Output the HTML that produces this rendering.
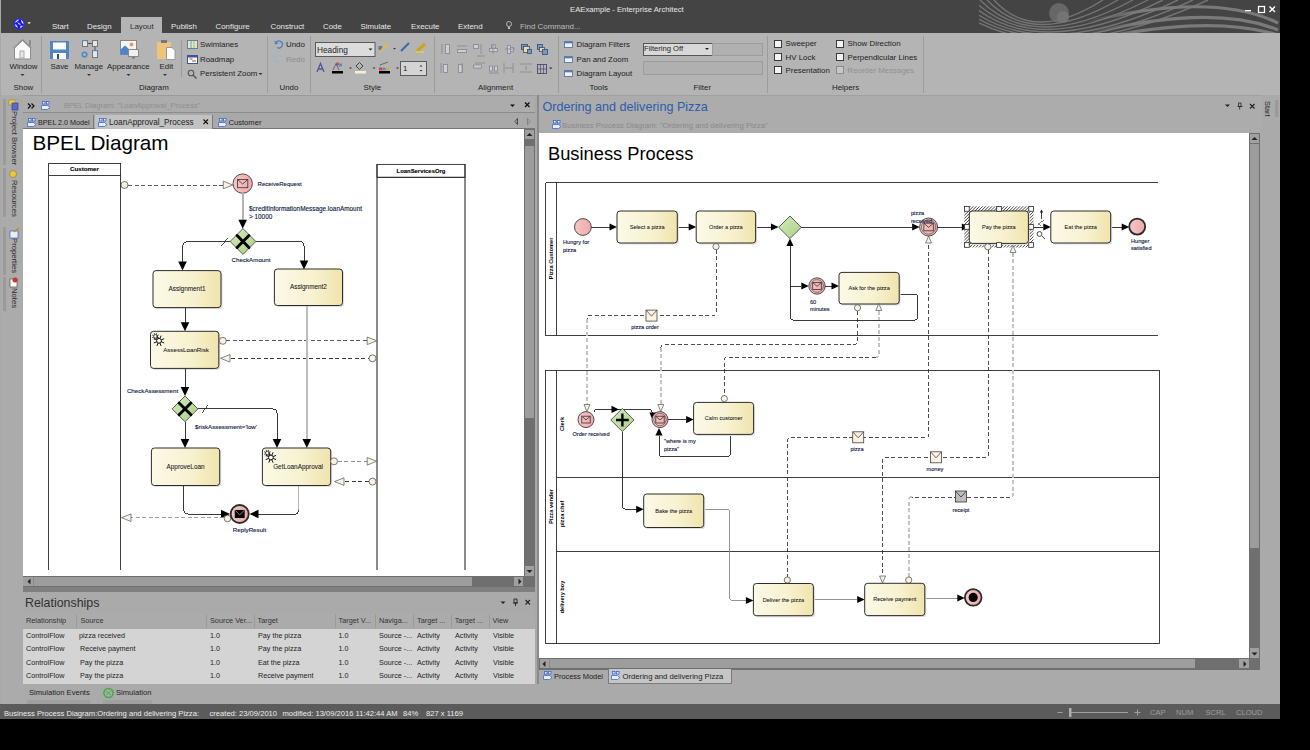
<!DOCTYPE html>
<html><head><meta charset="utf-8">
<style>
*{box-sizing:border-box}
html,body{margin:0;padding:0}
body{width:1310px;height:750px;background:#000;position:relative;overflow:hidden;font-family:"Liberation Sans",sans-serif;color:#1e1e1e}
.a{position:absolute}
.t{position:absolute;white-space:nowrap;font-size:7.9px;line-height:10px}
.tb{background:#444}
.sep{position:absolute;width:1px;background:#9c9c9c}
.cb{position:absolute;width:8px;height:8px;background:#f4f4f4;border:1px solid #3a3a3a}
</style></head>
<body>
<div class="a" style="left:0;top:0;width:1280px;height:718px;background:#aaaaaa"></div>
<!-- title bar -->
<div class="a tb" style="left:0;top:0;width:1280px;height:33px"></div>
<div class="t" style="left:570px;top:4.8px;color:#e8e8e8;font-size:7.7px">EAExample - Enterprise Architect</div>
<!-- tabs -->
<div class="a" style="left:121px;top:17px;width:41px;height:16px;background:#b4b4b4"></div>
<div class="t" style="left:52px;top:21.5px;color:#e6e6e6">Start</div>
<div class="t" style="left:87px;top:21.5px;color:#e6e6e6">Design</div>
<div class="t" style="left:130px;top:21.5px;color:#303030">Layout</div>
<div class="t" style="left:171px;top:21.5px;color:#e6e6e6">Publish</div>
<div class="t" style="left:215.5px;top:21.5px;color:#e6e6e6">Configure</div>
<div class="t" style="left:270.5px;top:21.5px;color:#e6e6e6">Construct</div>
<div class="t" style="left:323px;top:21.5px;color:#e6e6e6">Code</div>
<div class="t" style="left:360.5px;top:21.5px;color:#e6e6e6">Simulate</div>
<div class="t" style="left:411px;top:21.5px;color:#e6e6e6">Execute</div>
<div class="t" style="left:458px;top:21.5px;color:#e6e6e6">Extend</div>
<div class="t" style="left:520px;top:21.5px;color:#bdbdbd">Find Command...</div>
<!-- ribbon -->
<div class="a" style="left:1px;top:33px;width:1279px;height:62px;background:#b4b4b4"></div>


<!-- ribbon content -->
<div class="sep" style="left:41px;top:36px;height:57px"></div>
<div class="sep" style="left:267px;top:36px;height:57px"></div>
<div class="sep" style="left:310px;top:36px;height:57px"></div>
<div class="sep" style="left:434px;top:36px;height:57px"></div>
<div class="sep" style="left:558px;top:36px;height:57px"></div>
<div class="sep" style="left:767px;top:36px;height:57px"></div>
<div class="sep" style="left:923px;top:36px;height:57px"></div>
<div class="sep" style="left:181px;top:40px;height:37px"></div>
<svg class="a" style="left:0;top:33px" width="440" height="62" viewBox="0 33 440 62">
 <!-- house -->
 <path d="M13 48 L22.5 39 L32 48 Z" fill="#8a8a8a"/>
 <path d="M14.5 48 L22.5 40.5 L30.5 48 V59 H14.5 Z" fill="#fafafa" stroke="#8c8c8c" stroke-width="1"/>
 <rect x="29" y="40" width="2" height="6" fill="#8c8c8c"/>
 <rect x="20" y="51" width="4" height="7" fill="#e8e8e8" stroke="#9a9a9a" stroke-width="0.8"/>
 <!-- save -->
 <rect x="50" y="41" width="19" height="18" fill="#4f86c6"/>
 <rect x="53" y="42.5" width="13" height="7" fill="#fbfbfb"/>
 <rect x="53" y="53" width="13" height="6" fill="#fbfbfb"/>
 <rect x="57" y="54" width="2" height="5" fill="#2d4f7a"/>
 <!-- manage -->
 <rect x="82.5" y="40.5" width="5" height="6" fill="#e6e6e6" stroke="#777" stroke-width="1"/>
 <rect x="92.5" y="40.5" width="5" height="6" fill="#e6e6e6" stroke="#777" stroke-width="1"/>
 <rect x="92.5" y="50.5" width="5" height="7" fill="#e6e6e6" stroke="#777" stroke-width="1"/>
 <path d="M88 43.5 H92 M95 47 V50" stroke="#555" stroke-width="1"/>
 <rect x="82" y="40" width="6" height="1.2" fill="#4a8ad0"/>
 <rect x="92" y="50" width="6" height="1.2" fill="#4a8ad0"/>
 <circle cx="84.5" cy="54.5" r="2.3" fill="none" stroke="#4a8ad0" stroke-width="1.6"/>
 <!-- appearance -->
 <rect x="120.5" y="40.5" width="16" height="14" fill="#f4f4f4" stroke="#888" stroke-width="1"/>
 <path d="M120.5 54.5 V49.5 L125 45.5 L129.5 49.5 V54.5 Z" fill="#4a86c8"/>
 <circle cx="131.5" cy="44.5" r="2" fill="#ee9a55"/>
 <rect x="128.5" y="49.5" width="10" height="7" fill="#f0f0f0" stroke="#888" stroke-width="1"/>
 <rect x="132" y="57" width="3" height="1.5" fill="#777"/>
 <!-- edit -->
 <rect x="157" y="42" width="14" height="17" fill="#eec47a"/>
 <rect x="161" y="40" width="6" height="3" fill="#777"/>
 <path d="M166.5 47.5 H172 L175 50.5 V59.5 H166.5 Z" fill="#fff" stroke="#999" stroke-width="1"/>
 <!-- arrows -->
 <path d="M20.5 74 h4 l-2 2z M87 74 h4 l-2 2z M126.5 74 h4 l-2 2z M163 74 h4 l-2 2z M258.5 73 h4 l-2 2z" fill="#333"/>
 <!-- swimlanes, roadmap, zoom -->
 <rect x="187.5" y="40.5" width="10" height="8" fill="#f2e4b0" stroke="#6a7da0" stroke-width="1"/>
 <rect x="190" y="41" width="2" height="7" fill="#9cc3e0"/><rect x="193" y="41" width="2" height="7" fill="#b8d8a0"/>
 <rect x="187.5" y="55.5" width="10" height="8" fill="#fafafa" stroke="#3a5a90" stroke-width="1"/>
 <rect x="188" y="56" width="9" height="1.5" fill="#3a5a90"/>
 <path d="M189.5 59 h3 M192 61 h4" stroke="#d04040" stroke-width="1"/>
 <circle cx="191" cy="73" r="2.8" fill="none" stroke="#555" stroke-width="1.1"/>
 <path d="M193 75 L196.5 78.5" stroke="#555" stroke-width="1.4"/>
 <!-- undo redo -->
 <path d="M276 42.5 A3.5 3.5 0 1 1 277 47.5" fill="none" stroke="#4a7fc8" stroke-width="1.3"/>
 <path d="M274.5 40.5 L275 44.5 L278.5 43.5 Z" fill="#4a7fc8"/>
 <path d="M281 56.5 A3.5 3.5 0 1 0 280 61.5" fill="none" stroke="#98b4d8" stroke-width="1.3"/>
 <!-- style -->
 <rect x="315.5" y="42.5" width="59.5" height="14" fill="#dcdcdc" stroke="#5a5a5a" stroke-width="1"/>
 <path d="M368.5 48.5 h4 l-2 2z" fill="#222"/>
 <path d="M378.5 46 h4 v4 h-4z" fill="#5a7ab0"/>
 <path d="M381 51 L387 44" stroke="#e8b840" stroke-width="2.2"/>
 <path d="M393 48 h3 l-1.5 1.5z M349 67.5 h3 l-1.5 1.5z M372.5 67.5 h3 l-1.5 1.5z M396 67.5 h3 l-1.5 1.5z" fill="#333"/>
 <path d="M401 51 L409 43" stroke="#3a6ab0" stroke-width="2"/>
 <path d="M417 51 L425 44" stroke="#d0a020" stroke-width="3"/>
 <path d="M416 52 h8" stroke="#e0d040" stroke-width="1.5"/>
 <path d="M317 72 L320.5 63.5 L324 72 M318.3 69 h4.4" fill="none" stroke="#4a5a90" stroke-width="1.3"/>
 <rect x="332" y="71" width="11" height="2.5" fill="#000"/>
 <rect x="336" y="62.5" width="3" height="3" fill="#e05040"/><rect x="339" y="63.5" width="3" height="3" fill="#4a90e0"/>
 <path d="M333 70 L336 63.5 L339 70" fill="none" stroke="#555" stroke-width="0.8"/>
 <rect x="355" y="71" width="11" height="2.5" fill="#f4f0d0"/>
 <path d="M356 66 L359.5 62.5 L363 66 L359.5 69.5Z" fill="none" stroke="#444" stroke-width="1"/>
 <rect x="379" y="71" width="11" height="2.5" fill="#000"/>
 <rect x="379" y="67.5" width="3" height="3" fill="#e04040"/><rect x="382.5" y="67.5" width="3" height="3" fill="#4a90e0"/><rect x="386" y="67.5" width="3" height="3" fill="#f0a030"/>
 <path d="M380 65 L388 62" stroke="#555" stroke-width="0.8"/>
 <rect x="400.5" y="61.5" width="26" height="14" fill="#d4d4d4" stroke="#5a5a5a" stroke-width="1"/>
 <path d="M419.5 66.5 h3 l-1.5 -1.5z M419.5 70 h3 l-1.5 1.5z" fill="#333"/>
</svg>
<div class="t" style="left:9.5px;top:61.5px">Window</div>
<div class="t" style="left:13.5px;top:82.5px">Show</div>
<div class="t" style="left:50.5px;top:61.5px">Save</div>
<div class="t" style="left:74.5px;top:61.5px">Manage</div>
<div class="t" style="left:107px;top:61.5px">Appearance</div>
<div class="t" style="left:159.5px;top:61.5px">Edit</div>
<div class="t" style="left:139px;top:82.5px">Diagram</div>
<div class="t" style="left:200px;top:39.5px">Swimlanes</div>
<div class="t" style="left:200px;top:54.5px">Roadmap</div>
<div class="t" style="left:200px;top:69px">Persistent Zoom</div>
<div class="t" style="left:286px;top:39.5px">Undo</div>
<div class="t" style="left:286px;top:54.5px;color:#8e8e8e">Redo</div>
<div class="t" style="left:279.5px;top:82.5px">Undo</div>
<div class="t" style="left:317px;top:44.5px;font-size:8.3px">Heading</div>
<div class="t" style="left:403px;top:63.5px">1</div>
<div class="t" style="left:363.5px;top:82.5px">Style</div>
<div class="t" style="left:478px;top:82.5px">Alignment</div>
<div class="t" style="left:576.5px;top:39.5px">Diagram Filters</div>
<div class="t" style="left:576.5px;top:54.5px">Pan and Zoom</div>
<div class="t" style="left:576.5px;top:69px">Diagram Layout</div>
<div class="t" style="left:589.5px;top:82.5px">Tools</div>


<!-- alignment icons -->
<svg class="a" style="left:436px;top:40px" width="120" height="38" viewBox="436 40 120 38">
 <g fill="#cfcfcf" stroke="#8a8a9a" stroke-width="0.9">
  <rect x="445.5" y="44.5" width="4" height="9"/>
  <rect x="457.5" y="49.5" width="9" height="3"/>
  <rect x="473.5" y="44.5" width="5" height="4"/>
  <rect x="489.5" y="48.5" width="8" height="3"/><rect x="491.5" y="45" width="4" height="3"/>
  <rect x="507.5" y="45.5" width="3" height="8"/><rect x="510.5" y="47.5" width="3" height="4"/>
  <rect x="443.5" y="64.5" width="4" height="8"/><rect x="458.5" y="64.5" width="4" height="8"/>
  <rect x="473.5" y="65" width="8" height="3"/><rect x="489.5" y="66" width="3" height="5"/><rect x="494.5" y="66" width="3" height="5"/>
 </g>
 <g stroke="#8a8a9a" stroke-width="0.9" fill="none">
  <path d="M442 44 v10 M457 46 h10 M481 44 v10 M477 56 h8 M493 44 v10 M505 49 h10 M441 63 v10 M462 63 v10 M475 63 h10 M489 73 h10 M504 63 v10 M513 63 v10 M505 68 h8 M520 64 h12 M520 72 h12 M526 66 v4"/>
 </g>
 <rect x="521.5" y="44.5" width="6" height="5" fill="#6f9bd0" stroke="#3a4a70" stroke-width="0.8"/>
 <rect x="523.5" y="46.5" width="6" height="6" fill="#f0d8a0" stroke="#3a4a70" stroke-width="0.8"/>
 <rect x="527.5" y="49.5" width="4" height="4" fill="#6f9bd0" stroke="#3a4a70" stroke-width="0.8"/>
 <rect x="537.5" y="44.5" width="5" height="5" fill="#6f9bd0" stroke="#3a4a70" stroke-width="0.8"/>
 <rect x="539.5" y="47.5" width="5" height="4" fill="#f0d8a0" stroke="#3a4a70" stroke-width="0.8"/>
 <rect x="542.5" y="49.5" width="5" height="5" fill="#6f9bd0" stroke="#3a4a70" stroke-width="0.8"/>
 <rect x="537.5" y="64.5" width="9" height="9" fill="none" stroke="#4a4a70" stroke-width="0.9"/>
 <path d="M540.5 64 v10 M543.5 64 v10 M537 69 h10" stroke="#4a4a70" stroke-width="0.7"/>
 <path d="M549 67.5 h3.5 l-1.75 1.75z" fill="#333"/>
</svg>
<svg class="a" style="left:560px;top:38px" width="20" height="40" viewBox="560 38 20 40">
 <rect x="564.5" y="41.5" width="8" height="6" fill="#eef2f8" stroke="#5577aa" stroke-width="0.9"/><rect x="565" y="42" width="7" height="1.3" fill="#5577aa"/>
 <rect x="564.5" y="56.5" width="8" height="6" fill="#eef2f8" stroke="#5577aa" stroke-width="0.9"/><rect x="565" y="57" width="7" height="1.3" fill="#5577aa"/>
 <rect x="564.5" y="70.5" width="8" height="6" fill="#eef2f8" stroke="#5577aa" stroke-width="0.9"/><rect x="565" y="71" width="7" height="1.3" fill="#5577aa"/>
</svg>
<!-- filter -->
<div class="a" style="left:642.5px;top:42.5px;width:70px;height:13.5px;background:#d8d8d8;border:1px solid #555"></div>
<div class="t" style="left:644px;top:44px;font-size:7.6px">Filtering Off</div>
<svg class="a" style="left:700px;top:45px" width="12" height="8"><path d="M5 3 h4 l-2 2z" fill="#222"/></svg>
<div class="a" style="left:712px;top:42.5px;width:51px;height:13.5px;background:#b0b0b0;border:1px solid #9c9c9c"></div>
<div class="a" style="left:642.5px;top:61px;width:120px;height:13.5px;background:#b0b0b0;border:1px solid #9c9c9c"></div>
<div class="t" style="left:693.5px;top:82.5px">Filter</div>
<!-- helpers -->
<div class="cb" style="left:774px;top:40px"></div>
<div class="cb" style="left:774px;top:53px"></div>
<div class="cb" style="left:774px;top:66px"></div>
<div class="cb" style="left:836px;top:40px"></div>
<div class="cb" style="left:836px;top:53px"></div>
<div class="cb" style="left:836px;top:66px;border-color:#8c8c8c;background:#c8c8c8"></div>
<div class="t" style="left:785.5px;top:39px">Sweeper</div>
<div class="t" style="left:785.5px;top:52.5px">HV Lock</div>
<div class="t" style="left:785.5px;top:65.5px">Presentation</div>
<div class="t" style="left:847.5px;top:39px">Show Direction</div>
<div class="t" style="left:847.5px;top:52.5px">Perpendicular Lines</div>
<div class="t" style="left:847.5px;top:65.5px;color:#909090">Reorder Messages</div>
<div class="t" style="left:832px;top:82.5px">Helpers</div>
<!-- title decorations -->
<svg class="a" style="left:0;top:0" width="1280" height="33" viewBox="0 0 1280 33">
 <circle cx="19.2" cy="23.8" r="5.6" fill="#2a2af6"/>
 <circle cx="19.2" cy="23.8" r="3.6" fill="none" stroke="#e4e4ff" stroke-width="1.3"/>
 <circle cx="19.8" cy="20.6" r="1.3" fill="#0c0ce8"/><circle cx="16.2" cy="23.4" r="1.2" fill="#0c0ce8"/><circle cx="22.3" cy="24.6" r="1.2" fill="#0c0ce8"/><circle cx="18.8" cy="26.9" r="1.3" fill="#0c0ce8"/>
 <path d="M17.8 22.8 L20.6 24.8" stroke="#f4f4ff" stroke-width="0.9"/>
 <path d="M27.3 22.3 h3.6 l-1.8 2z" fill="#eee"/>
 <defs><clipPath id="cl1"><rect x="979" y="0" width="300" height="33"/></clipPath><linearGradient id="fadeg" gradientUnits="userSpaceOnUse" x1="1085" x2="1135" y1="0" y2="0"><stop offset="0" stop-color="#fff" stop-opacity="0"/><stop offset="1" stop-color="#fff" stop-opacity="1"/></linearGradient><mask id="mk1"><rect x="960" y="0" width="320" height="33" fill="url(#fadeg)"/></mask></defs>
 <circle cx="1059" cy="13" r="10" fill="#676767"/>
 <circle cx="1063" cy="17" r="6" fill="#747474"/>
 <g clip-path="url(#cl1)" fill="none" stroke="#747474" stroke-width="1.4">
  <path d="M994 0 Q1033.5 44 1103 0"/>
  <path d="M987 0 Q1033.5 49 1118 0"/>
  <path d="M980 0 Q1033.5 54 1133 0"/>
  <path d="M973 0 Q1033.5 59 1148 0"/>
  <path d="M966 0 Q1033.5 64 1163 0"/>
  <path d="M959 0 Q1033.5 69 1178 0"/>
  <path d="M952 0 Q1033.5 74 1193 0"/>
  <path d="M945 0 Q1033.5 79 1208 0"/>
 </g>
 <g mask="url(#mk1)" fill="none" stroke="#7a7a7a" stroke-width="3.2">
  <path d="M1080 24 Q1210 -10 1278 23"/>
  <path d="M1080 36 Q1210 2 1278 30"/>
  <path d="M1090 40 Q1210 14 1278 35"/>
 </g>
 <rect x="1245" y="10" width="6" height="1.3" fill="#fff"/>
 <rect x="1258.5" y="6.5" width="6" height="6" fill="none" stroke="#fff" stroke-width="1.3"/>
 <path d="M1269.5 6.5 l5.5 5.5 M1275 6.5 l-5.5 5.5" stroke="#fff" stroke-width="1.3"/>
 <!-- find bulb -->
 <circle cx="509" cy="24" r="2.5" fill="none" stroke="#c0c0c0" stroke-width="0.9"/>
 <path d="M508 27 h2 v2 h-2z" fill="#c0c0c0"/>
</svg>

<!-- left strip -->
<div class="a" style="left:0;top:95px;width:23px;height:609px;background:#ababab;border-left:1px solid #b8b8b8"></div>
<div class="a" style="left:3px;top:99px;width:3px;height:66px;background:#9a9a9a"></div>
<div class="a" style="left:3px;top:168px;width:3px;height:49px;background:#9a9a9a"></div>
<div class="a" style="left:3px;top:227px;width:3px;height:48px;background:#9a9a9a"></div>
<div class="a" style="left:3px;top:277px;width:3px;height:34px;background:#9a9a9a"></div>
<div class="t" style="left:19px;top:111px;transform-origin:0 0;transform:rotate(90deg);font-size:7.7px;color:#2a2a2a">Project Browser</div>
<div class="t" style="left:19px;top:180px;transform-origin:0 0;transform:rotate(90deg);font-size:7.7px;color:#2a2a2a">Resources</div>
<div class="t" style="left:19px;top:238px;transform-origin:0 0;transform:rotate(90deg);font-size:7.7px;color:#2a2a2a">Properties</div>
<div class="t" style="left:19px;top:288px;transform-origin:0 0;transform:rotate(90deg);font-size:7.7px;color:#2a2a2a">Notes</div>
<svg class="a" style="left:0;top:95px" width="23" height="220" viewBox="0 95 23 220">
 <rect x="9" y="100" width="6" height="5" fill="#e8d040" stroke="#a08a20" stroke-width="0.6"/>
 <rect x="12" y="103" width="6" height="7" fill="#5a6ad0" stroke="#303080" stroke-width="0.6"/>
 <circle cx="13" cy="174" r="3.5" fill="#e8c840" stroke="#908030" stroke-width="0.7"/>
 <rect x="10" y="231" width="8" height="7" fill="#e8f0ff" stroke="#4060b0" stroke-width="0.7"/>
 <path d="M14 232 L19 228" stroke="#b09020" stroke-width="1.2"/>
 <rect x="10" y="279" width="7" height="8" fill="#fff" stroke="#555" stroke-width="0.7"/>
 <circle cx="15" cy="280" r="2.5" fill="#d03030"/>
</svg>

<!-- left panel -->
<div class="a" style="left:23px;top:95px;width:512px;height:18px;background:#acacac;border-top:1px solid #9a9a9a;border-bottom:1px solid #8c8c8c"></div>
<div class="a" style="left:23px;top:113px;width:512px;height:16px;background:#a9a9a9;border-bottom:1px solid #767676"></div>
<div class="a" style="left:95px;top:115px;width:117px;height:14px;background:#c2c2c2"></div>
<div class="a" style="left:93px;top:115px;width:1px;height:14px;background:#7a7a7a"></div>
<div class="a" style="left:212px;top:115px;width:1px;height:14px;background:#7a7a7a"></div>
<div class="t" style="left:64px;top:101px;font-size:7.5px;color:#8e8e8e">BPEL Diagram: "LoanApproval_Process"</div>
<div class="t" style="left:38px;top:118px;font-size:7.2px;color:#222">BPEL 2.0 Model</div>
<div class="t" style="left:109px;top:118px;font-size:8.2px;color:#222">LoanApproval_Process</div>
<div class="t" style="left:228.5px;top:118px;font-size:7.6px;color:#222">Customer</div>
<svg class="a" style="left:23px;top:95px" width="512" height="34" viewBox="23 95 512 34">
 <g>
  <g fill="#e4eefc" stroke="#3a6ad0" stroke-width="0.8"><rect x="42.5" y="101.5" width="2.5" height="2.5"/><rect x="46.5" y="101.5" width="2.5" height="2.5"/><path d="M41.5 105.5 h6 l2.5 2 l-2.5 2 h-6 z"/></g>
  <g fill="#e4eefc" stroke="#3a6ad0" stroke-width="0.8"><rect x="28.5" y="118.5" width="2.5" height="2.5"/><rect x="32.5" y="118.5" width="2.5" height="2.5"/><path d="M27.5 122.5 h6 l2.5 2 l-2.5 2 h-6 z"/></g>
  <g fill="#e4eefc" stroke="#3a6ad0" stroke-width="0.8"><rect x="99.5" y="118.5" width="2.5" height="2.5"/><rect x="103.5" y="118.5" width="2.5" height="2.5"/><path d="M98.5 122.5 h6 l2.5 2 l-2.5 2 h-6 z"/></g>
  <g fill="#e4eefc" stroke="#3a6ad0" stroke-width="0.8"><rect x="219.5" y="118.5" width="2.5" height="2.5"/><rect x="223.5" y="118.5" width="2.5" height="2.5"/><path d="M218.5 122.5 h6 l2.5 2 l-2.5 2 h-6 z"/></g>
 </g>
 <path d="M203.5 119.5 l4.5 4.5 M208 119.5 l-4.5 4.5" stroke="#111" stroke-width="1.1"/>
 <path d="M28 103.5 l2.5 2.5 l-2.5 2.5 M31.5 103.5 l2.5 2.5 l-2.5 2.5" fill="none" stroke="#111" stroke-width="1.2"/>
 <path d="M510 104.5 h5 l-2.5 2.5z" fill="#111"/>
 <path d="M525 102.5 l4.5 4.5 M529.5 102.5 l-4.5 4.5" stroke="#111" stroke-width="1.3"/>
 <path d="M517.5 118.5 v6 l-2.5 -3z" fill="none" stroke="#333" stroke-width="0.8"/>
 <path d="M527.5 118.5 v6 l2.5 -3z" fill="none" stroke="#777" stroke-width="0.8"/>
</svg>
<div class="a" style="left:23px;top:129px;width:501px;height:447px;background:#fff"></div>
<!--BPEL-->
<svg class="a" style="left:23px;top:129px" width="501" height="447" viewBox="23 129 501 447" font-family='"Liberation Sans",sans-serif'>
<defs>
<linearGradient id="ga" x1="0" x2="1" y1="0" y2="0"><stop offset="0" stop-color="#fcf9e6"/><stop offset="0.55" stop-color="#f8f2d2"/><stop offset="1" stop-color="#efe4ac"/></linearGradient>
<linearGradient id="ge" x1="0" x2="1" y1="0" y2="0"><stop offset="0" stop-color="#f6c6c6"/><stop offset="1" stop-color="#f0a8a8"/></linearGradient>
<linearGradient id="gg" x1="0" x2="1" y1="0" y2="1"><stop offset="0" stop-color="#d6ebbc"/><stop offset="1" stop-color="#a8cf84"/></linearGradient>
<pattern id="hatch" width="2.2" height="2.2" patternUnits="userSpaceOnUse" patternTransform="rotate(45)"><rect width="2.2" height="2.2" fill="#fff"/><line x1="0" y1="0" x2="0" y2="2.2" stroke="#222" stroke-width="1.2"/></pattern>
</defs>
<text x="32.5" y="150" font-size="20.7" fill="#000">BPEL Diagram</text>
<path d="M48.5 569.5 V163 H120.5 V569.5" fill="none" stroke="#2a2a2a" stroke-width="0.9" shape-rendering="crispEdges"/>
<path d="M48.5 175.2 H120.5" fill="none" stroke="#2a2a2a" stroke-width="0.9" shape-rendering="crispEdges"/>
<text x="84.5" y="171.17" font-size="6.2" text-anchor="middle" fill="#000" stroke="#000" stroke-width="0.12" font-weight="bold">Customer</text>
<path d="M377 569.5 V164.4 M465 164.4 V569.5" fill="none" stroke="#8a8a8a" stroke-width="1.1" shape-rendering="crispEdges"/>
<path d="M377 177.2 H465" fill="none" stroke="#2a2a2a" stroke-width="0.9" shape-rendering="crispEdges"/>
<rect x="377" y="164.4" width="88" height="12.8" fill="none" stroke="#2a2a2a" stroke-width="0.9"/>
<text x="421" y="172.87" font-size="5.9" text-anchor="middle" fill="#000" stroke="#000" stroke-width="0.12" font-weight="bold">LoanServicesOrg</text>
<path d="M128 185 H223" fill="none" stroke="#333" stroke-width="0.8" stroke-dasharray="4,2.5" shape-rendering="crispEdges"/>
<circle cx="124.5" cy="185" r="3.5" fill="#f8f2e2" stroke="#444" stroke-width="0.7"/>
<polygon points="232.80,185.00 223.30,181.20 223.30,188.80" fill="#f8f4e4" stroke="#555" stroke-width="0.7"/>
<circle cx="242.7" cy="183.6" r="9.7" fill="url(#ge)" stroke="#2a2a2a" stroke-width="0.8"/><rect x="237.6075" y="179.4775" width="10.185" height="8.245" fill="none" stroke="#333" stroke-width="0.8"/><path d="M237.6075 179.4775 L242.7 184.01225 L247.7925 179.4775" fill="none" stroke="#333" stroke-width="0.8"/>
<text x="257.6" y="185.70" font-size="6.0" text-anchor="start" fill="#0c1640" stroke="#0c1640" stroke-width="0.12">ReceiveRequest</text>
<path d="M242.7 193.3 V221" fill="none" stroke="#b4b4b4" stroke-width="2" shape-rendering="crispEdges"/>
<polygon points="242.70,228.80 238.40,219.80 247.00,219.80" fill="#000"/>
<text x="249" y="211.04" font-size="6.4" text-anchor="start" fill="#0c1640" stroke="#0c1640" stroke-width="0.12">$creditInformationMessage.loanAmount</text>
<text x="249" y="219.24" font-size="6.4" text-anchor="start" fill="#0c1640" stroke="#0c1640" stroke-width="0.12">&gt; 10000</text>
<path d="M230 241.5 H186.5 Q182.5 241.5 182.5 245.5 V262" fill="none" stroke="#222" stroke-width="0.9" shape-rendering="crispEdges"/>
<path d="M221 245.5 L227 237.5" fill="none" stroke="#222" stroke-width="0.8" shape-rendering="crispEdges"/>
<path d="M255.3 241.5 H300 Q304 241.5 304 245.5 V261" fill="none" stroke="#222" stroke-width="0.9" shape-rendering="crispEdges"/>
<polygon points="182.50,270.60 178.20,261.60 186.80,261.60" fill="#000"/>
<polygon points="304.00,269.50 299.70,260.50 308.30,260.50" fill="#000"/>
<polygon points="243,228.6 255.9,241.5 243,254.4 230.1,241.5" fill="url(#gg)" stroke="#3a3a3a" stroke-width="0.8"/><path d="M237.066 235.566 L248.934 247.434 M248.934 235.566 L237.066 247.434" stroke="#000" stroke-width="2.9" stroke-linecap="round"/>
<text x="251" y="261.97" font-size="6.2" text-anchor="middle" fill="#0c1640" stroke="#0c1640" stroke-width="0.12">CheckAmount</text>
<rect x="154.5" y="272.1" width="68" height="37.0" rx="3" fill="#e0e0e0"/><rect x="153" y="270.6" width="68" height="37.0" rx="3" fill="url(#ga)" stroke="#222" stroke-width="0.95"/><text x="187.0" y="291.34000000000003" font-size="6.4" text-anchor="middle" fill="#141420" stroke="#141420" stroke-width="0.06">Assignment1</text>
<rect x="275.9" y="270.5" width="68.10000000000002" height="36.5" rx="3" fill="#e0e0e0"/><rect x="274.4" y="269" width="68.10000000000002" height="36.5" rx="3" fill="url(#ga)" stroke="#222" stroke-width="0.95"/><text x="308.45" y="289.49" font-size="6.4" text-anchor="middle" fill="#141420" stroke="#141420" stroke-width="0.06">Assignment2</text>
<path d="M185 307.6 V323" fill="none" stroke="#222" stroke-width="0.9" shape-rendering="crispEdges"/>
<polygon points="185.00,331.30 180.70,322.30 189.30,322.30" fill="#000"/>
<rect x="152.0" y="332.8" width="68.30000000000001" height="37.099999999999966" rx="3" fill="#e0e0e0"/><rect x="150.5" y="331.3" width="68.30000000000001" height="37.099999999999966" rx="3" fill="url(#ga)" stroke="#222" stroke-width="0.95"/><text x="186" y="352.02000000000004" font-size="6.2" text-anchor="middle" fill="#141420" stroke="#141420" stroke-width="0.06">AssessLoanRisk</text><g stroke="#111" stroke-width="0.7" fill="none"><circle cx="155.5" cy="336.3" r="1.8" fill="#fff"/><line x1="157.16" y1="336.99" x2="158.83" y2="337.68"/><line x1="156.19" y1="337.96" x2="156.88" y2="339.63"/><line x1="154.81" y1="337.96" x2="154.12" y2="339.63"/><line x1="153.84" y1="336.99" x2="152.17" y2="337.68"/><line x1="153.84" y1="335.61" x2="152.17" y2="334.92"/><line x1="154.81" y1="334.64" x2="154.12" y2="332.97"/><line x1="156.19" y1="334.64" x2="156.88" y2="332.97"/><line x1="157.16" y1="335.61" x2="158.83" y2="334.92"/></g><g stroke="#111" stroke-width="1.0" fill="none"><circle cx="159.0" cy="340.8" r="2.4" fill="#fff"/><line x1="161.22" y1="341.72" x2="164.17" y2="342.94"/><line x1="159.92" y1="343.02" x2="161.14" y2="345.97"/><line x1="158.08" y1="343.02" x2="156.86" y2="345.97"/><line x1="156.78" y1="341.72" x2="153.83" y2="342.94"/><line x1="156.78" y1="339.88" x2="153.83" y2="338.66"/><line x1="158.08" y1="338.58" x2="156.86" y2="335.63"/><line x1="159.92" y1="338.58" x2="161.14" y2="335.63"/><line x1="161.22" y1="339.88" x2="164.17" y2="338.66"/></g>
<path d="M226 340.8 H368" fill="none" stroke="#333" stroke-width="0.8" stroke-dasharray="4,2.5" shape-rendering="crispEdges"/>
<circle cx="222.8" cy="340.8" r="3.5" fill="#f8f2e2" stroke="#444" stroke-width="0.7"/>
<polygon points="376.70,340.80 367.20,337.00 367.20,344.60" fill="#f8f4e4" stroke="#555" stroke-width="0.7"/>
<path d="M231 358.3 H369" fill="none" stroke="#222" stroke-width="0.9" stroke-dasharray="4,2.5" shape-rendering="crispEdges"/>
<polygon points="220.50,358.30 230.00,354.50 230.00,362.10" fill="#f8f4e4" stroke="#555" stroke-width="0.7"/>
<circle cx="372.5" cy="358.3" r="3.5" fill="#f8f2e2" stroke="#444" stroke-width="0.7"/>
<path d="M185 368.4 V388" fill="none" stroke="#222" stroke-width="0.9" shape-rendering="crispEdges"/>
<polygon points="185.00,396.00 180.70,387.00 189.30,387.00" fill="#000"/>
<text x="126.9" y="392.67" font-size="6.2" text-anchor="start" fill="#0c1640" stroke="#0c1640" stroke-width="0.12">CheckAssessment</text>
<path d="M198 408.9 H273 Q277 408.9 277 412.9 V439" fill="none" stroke="#222" stroke-width="0.9" shape-rendering="crispEdges"/>
<path d="M202 413 L208 405" fill="none" stroke="#222" stroke-width="0.8" shape-rendering="crispEdges"/>
<path d="M185 421.8 V440" fill="none" stroke="#222" stroke-width="0.9" shape-rendering="crispEdges"/>
<polygon points="185.00,448.00 180.70,439.00 189.30,439.00" fill="#000"/>
<polygon points="277.00,448.00 272.70,439.00 281.30,439.00" fill="#000"/>
<polygon points="185,396.0 197.9,408.9 185,421.79999999999995 172.1,408.9" fill="url(#gg)" stroke="#3a3a3a" stroke-width="0.8"/><path d="M179.066 402.96599999999995 L190.934 414.834 M190.934 402.96599999999995 L179.066 414.834" stroke="#000" stroke-width="2.9" stroke-linecap="round"/>
<text x="195" y="428.87" font-size="6.2" text-anchor="start" fill="#0c1640" stroke="#0c1640" stroke-width="0.12">$riskAssessment='low'</text>
<path d="M306.8 305.5 V440" fill="none" stroke="#bdbdbd" stroke-width="2" shape-rendering="crispEdges"/>
<polygon points="306.80,448.00 302.50,439.00 311.10,439.00" fill="#000"/>
<rect x="152.9" y="449.5" width="68.29999999999998" height="37.5" rx="3" fill="#e0e0e0"/><rect x="151.4" y="448" width="68.29999999999998" height="37.5" rx="3" fill="url(#ga)" stroke="#222" stroke-width="0.95"/><text x="185.55" y="468.99" font-size="6.4" text-anchor="middle" fill="#141420" stroke="#141420" stroke-width="0.06">ApproveLoan</text>
<rect x="263.9" y="449.5" width="68.30000000000001" height="37.5" rx="3" fill="#e0e0e0"/><rect x="262.4" y="448" width="68.30000000000001" height="37.5" rx="3" fill="url(#ga)" stroke="#222" stroke-width="0.95"/><text x="298" y="468.99" font-size="6.4" text-anchor="middle" fill="#141420" stroke="#141420" stroke-width="0.06">GetLoanApproval</text><g stroke="#111" stroke-width="0.7" fill="none"><circle cx="267.4" cy="453" r="1.8" fill="#fff"/><line x1="269.06" y1="453.69" x2="270.73" y2="454.38"/><line x1="268.09" y1="454.66" x2="268.78" y2="456.33"/><line x1="266.71" y1="454.66" x2="266.02" y2="456.33"/><line x1="265.74" y1="453.69" x2="264.07" y2="454.38"/><line x1="265.74" y1="452.31" x2="264.07" y2="451.62"/><line x1="266.71" y1="451.34" x2="266.02" y2="449.67"/><line x1="268.09" y1="451.34" x2="268.78" y2="449.67"/><line x1="269.06" y1="452.31" x2="270.73" y2="451.62"/></g><g stroke="#111" stroke-width="1.0" fill="none"><circle cx="270.9" cy="457.5" r="2.4" fill="#fff"/><line x1="273.12" y1="458.42" x2="276.07" y2="459.64"/><line x1="271.82" y1="459.72" x2="273.04" y2="462.67"/><line x1="269.98" y1="459.72" x2="268.76" y2="462.67"/><line x1="268.68" y1="458.42" x2="265.73" y2="459.64"/><line x1="268.68" y1="456.58" x2="265.73" y2="455.36"/><line x1="269.98" y1="455.28" x2="268.76" y2="452.33"/><line x1="271.82" y1="455.28" x2="273.04" y2="452.33"/><line x1="273.12" y1="456.58" x2="276.07" y2="455.36"/></g>
<path d="M337.5 461.3 H368" fill="none" stroke="#777" stroke-width="0.8" stroke-dasharray="4,2.5" shape-rendering="crispEdges"/>
<circle cx="334" cy="461.3" r="3.5" fill="#f8f2e2" stroke="#444" stroke-width="0.7"/>
<polygon points="376.70,461.30 367.20,457.50 367.20,465.10" fill="#f8f4e4" stroke="#555" stroke-width="0.7"/>
<path d="M345 481.6 H369" fill="none" stroke="#222" stroke-width="0.9" stroke-dasharray="4,2.5" shape-rendering="crispEdges"/>
<polygon points="334.50,481.60 344.00,477.80 344.00,485.40" fill="#f8f4e4" stroke="#555" stroke-width="0.7"/>
<circle cx="372.5" cy="481.6" r="3.5" fill="#f8f2e2" stroke="#444" stroke-width="0.7"/>
<path d="M183.6 485.5 V510 Q183.6 514 187.6 514 H222" fill="none" stroke="#222" stroke-width="0.9" shape-rendering="crispEdges"/>
<polygon points="230.00,514.00 221.00,509.70 221.00,518.30" fill="#000"/>
<path d="M298.5 485.5 V510" fill="none" stroke="#b4b4b4" stroke-width="1.6" shape-rendering="crispEdges"/>
<path d="M298.5 510 Q298.5 514 294.5 514 H257" fill="none" stroke="#222" stroke-width="0.9" shape-rendering="crispEdges"/>
<polygon points="249.50,514.00 258.50,509.70 258.50,518.30" fill="#000"/>
<path d="M224 517.7 H131" fill="none" stroke="#888" stroke-width="0.8" stroke-dasharray="4,2.5" shape-rendering="crispEdges"/>
<polygon points="121.50,517.70 131.00,513.90 131.00,521.50" fill="#f8f4e4" stroke="#555" stroke-width="0.7"/>
<circle cx="227.5" cy="518.5" r="3.3" fill="#f8f2e2" stroke="#444" stroke-width="0.7"/>
<circle cx="239.7" cy="514" r="9.0" fill="url(#ge)" stroke="#2a2a2a" stroke-width="1.8"/><rect x="234.75" y="509.95" width="9.9" height="8.1" fill="#000"/><path d="M235.35 510.55 L239.7 514.81 L244.05 510.55" fill="none" stroke="#ddd" stroke-width="0.6"/>
<text x="249.5" y="532.17" font-size="6.2" text-anchor="middle" fill="#0c1640" stroke="#0c1640" stroke-width="0.12">ReplyResult</text>
</svg>
<!--/BPEL-->
<!-- left v scroll -->
<div class="a" style="left:524px;top:129px;width:11px;height:447px;background:#6f6f6f"></div>
<div class="a" style="left:525px;top:129.5px;width:9px;height:9.5px;background:#a0a0a0"></div>
<div class="a" style="left:525px;top:146px;width:9px;height:272px;background:#9c9c9c"></div>
<div class="a" style="left:525px;top:566px;width:9px;height:10px;background:#a0a0a0"></div>
<svg class="a" style="left:524px;top:129px" width="11" height="447"><path d="M2.5 7 h6 l-3 -3z" fill="#222"/><path d="M2.5 441 h6 l-3 3z" fill="#222"/></svg>
<!-- left h scroll -->
<div class="a" style="left:23px;top:576px;width:512px;height:10.5px;background:#6f6f6f"></div>
<div class="a" style="left:23px;top:577px;width:449px;height:9px;background:#9d9d9d"></div>
<div class="a" style="left:23px;top:577px;width:11px;height:9px;background:#a0a0a0;border-right:1px solid #888"></div>
<div class="a" style="left:514px;top:577px;width:9px;height:9px;background:#a0a0a0"></div>
<svg class="a" style="left:23px;top:576px" width="512" height="11"><path d="M7.5 2.5 v6 l-3 -3z" fill="#222"/><path d="M495.5 2.5 v6 l3 -3z" fill="#222"/></svg>
<div class="a" style="left:23px;top:586.5px;width:512px;height:5px;background:#7f7f7f"></div>

<!-- relationships -->
<div class="t" style="left:25px;top:596px;font-size:12.4px;line-height:14px;color:#303030">Relationships</div>
<svg class="a" style="left:495px;top:596px" width="40" height="14" viewBox="495 596 40 14">
 <path d="M500.5 601.5 h5 l-2.5 2.5z" fill="#222"/>
 <path d="M514 599 h3 v4 h-3z M515.5 603 v3 M513 603 h5" fill="none" stroke="#222" stroke-width="0.9"/>
 <path d="M525.5 600 l4.5 4.5 M530 600 l-4.5 4.5" stroke="#222" stroke-width="1.1"/>
</svg>
<div class="a" style="left:23px;top:629px;width:512px;height:55px;background:#d4d4d4"></div>
<div class="a" style="left:23px;top:613px;width:512px;height:16px;background:#ababab"></div>
<div class="t" style="left:26px;top:616px;font-size:7.3px;color:#333">Relationship</div>
<div class="t" style="left:80.4px;top:616px;font-size:7.3px;color:#333">Source</div>
<div class="t" style="left:210px;top:616px;font-size:7.3px;color:#333">Source Ver...</div>
<div class="t" style="left:257.6px;top:616px;font-size:7.3px;color:#333">Target</div>
<div class="t" style="left:338.5px;top:616px;font-size:7.3px;color:#333">Target V...</div>
<div class="t" style="left:379px;top:616px;font-size:7.3px;color:#333">Naviga...</div>
<div class="t" style="left:417px;top:616px;font-size:7.3px;color:#333">Target ...</div>
<div class="t" style="left:454.7px;top:616px;font-size:7.3px;color:#333">Target ...</div>
<div class="t" style="left:492.6px;top:616px;font-size:7.3px;color:#333">View</div>
<div class="a" style="left:76.3px;top:614px;width:1px;height:14px;background:#9a9a9a"></div>
<div class="a" style="left:206px;top:614px;width:1px;height:14px;background:#9a9a9a"></div>
<div class="a" style="left:254.3px;top:614px;width:1px;height:14px;background:#9a9a9a"></div>
<div class="a" style="left:335px;top:614px;width:1px;height:14px;background:#9a9a9a"></div>
<div class="a" style="left:375px;top:614px;width:1px;height:14px;background:#9a9a9a"></div>
<div class="a" style="left:413.4px;top:614px;width:1px;height:14px;background:#9a9a9a"></div>
<div class="a" style="left:450.5px;top:614px;width:1px;height:14px;background:#9a9a9a"></div>
<div class="a" style="left:489.3px;top:614px;width:1px;height:14px;background:#9a9a9a"></div>
<div class="t" style="left:26px;top:631px;font-size:7.2px;color:#222">ControlFlow</div>
<div class="t" style="left:79px;top:631px;font-size:7.2px;color:#222">pizza received</div>
<div class="t" style="left:210px;top:631px;font-size:7.2px;color:#222">1.0</div>
<div class="t" style="left:258px;top:631px;font-size:7.2px;color:#222">Pay the pizza</div>
<div class="t" style="left:338.5px;top:631px;font-size:7.2px;color:#222">1.0</div>
<div class="t" style="left:379px;top:631px;font-size:7.2px;color:#222">Source -...</div>
<div class="t" style="left:417px;top:631px;font-size:7.2px;color:#222">Activity</div>
<div class="t" style="left:455px;top:631px;font-size:7.2px;color:#222">Activity</div>
<div class="t" style="left:493px;top:631px;font-size:7.2px;color:#222">Visible</div>
<div class="t" style="left:26px;top:644.3px;font-size:7.2px;color:#222">ControlFlow</div>
<div class="t" style="left:80px;top:644.3px;font-size:7.2px;color:#222">Receive payment</div>
<div class="t" style="left:210px;top:644.3px;font-size:7.2px;color:#222">1.0</div>
<div class="t" style="left:258px;top:644.3px;font-size:7.2px;color:#222">Pay the pizza</div>
<div class="t" style="left:338.5px;top:644.3px;font-size:7.2px;color:#222">1.0</div>
<div class="t" style="left:379px;top:644.3px;font-size:7.2px;color:#222">Source -...</div>
<div class="t" style="left:417px;top:644.3px;font-size:7.2px;color:#222">Activity</div>
<div class="t" style="left:455px;top:644.3px;font-size:7.2px;color:#222">Activity</div>
<div class="t" style="left:493px;top:644.3px;font-size:7.2px;color:#222">Visible</div>
<div class="t" style="left:26px;top:657.5px;font-size:7.2px;color:#222">ControlFlow</div>
<div class="t" style="left:80px;top:657.5px;font-size:7.2px;color:#222">Pay the pizza</div>
<div class="t" style="left:210px;top:657.5px;font-size:7.2px;color:#222">1.0</div>
<div class="t" style="left:258px;top:657.5px;font-size:7.2px;color:#222">Eat the pizza</div>
<div class="t" style="left:338.5px;top:657.5px;font-size:7.2px;color:#222">1.0</div>
<div class="t" style="left:379px;top:657.5px;font-size:7.2px;color:#222">Source -...</div>
<div class="t" style="left:417px;top:657.5px;font-size:7.2px;color:#222">Activity</div>
<div class="t" style="left:455px;top:657.5px;font-size:7.2px;color:#222">Activity</div>
<div class="t" style="left:493px;top:657.5px;font-size:7.2px;color:#222">Visible</div>
<div class="t" style="left:26px;top:670.7px;font-size:7.2px;color:#222">ControlFlow</div>
<div class="t" style="left:80px;top:670.7px;font-size:7.2px;color:#222">Pay the pizza</div>
<div class="t" style="left:210px;top:670.7px;font-size:7.2px;color:#222">1.0</div>
<div class="t" style="left:258px;top:670.7px;font-size:7.2px;color:#222">Receive payment</div>
<div class="t" style="left:338.5px;top:670.7px;font-size:7.2px;color:#222">1.0</div>
<div class="t" style="left:379px;top:670.7px;font-size:7.2px;color:#222">Source -...</div>
<div class="t" style="left:417px;top:670.7px;font-size:7.2px;color:#222">Activity</div>
<div class="t" style="left:455px;top:670.7px;font-size:7.2px;color:#222">Activity</div>
<div class="t" style="left:493px;top:670.7px;font-size:7.2px;color:#222">Visible</div>

<!-- bottom tabs -->
<div class="t" style="left:29px;top:688px;font-size:7.6px;color:#222">Simulation Events</div>
<div class="t" style="left:116px;top:688px;font-size:7.6px;color:#222">Simulation</div>
<svg class="a" style="left:100px;top:685px" width="18" height="16"><circle cx="8.5" cy="8" r="4.6" fill="none" stroke="#3ab03a" stroke-width="1.5"/><path d="M6 6 l5 4 M11 6 l-5 4" stroke="#3ab03a" stroke-width="0.8"/></svg>
<div class="a" style="left:27px;top:700px;width:63px;height:4px;background:#a0a0a0"></div>
<div class="a" style="left:103px;top:700px;width:49px;height:4px;background:#a0a0a0"></div>

<!-- splitter -->
<div class="a" style="left:535px;top:95px;width:4px;height:589px;background:#a8a8a8"></div>
<div class="a" style="left:537px;top:95px;width:2px;height:589px;background:#8a8a8a"></div>

<!-- right panel -->
<div class="a" style="left:539px;top:95px;width:723px;height:38px;background:#acacac;border-top:1px solid #a0a0a0"></div>
<div class="t" style="left:542.5px;top:99px;font-size:12.6px;line-height:16px;color:#2d5cad">Ordering and delivering Pizza</div>
<div class="t" style="left:562px;top:120.5px;font-size:7.8px;color:#8a8a8a">Business Process Diagram: "Ordering and delivering Pizza"</div>
<svg class="a" style="left:539px;top:95px" width="741" height="38" viewBox="539 95 741 38">
 <g>
  <g fill="#e4eefc" stroke="#3a6ad0" stroke-width="0.8"><rect x="553.5" y="120.5" width="2.5" height="2.5"/><rect x="557.5" y="120.5" width="2.5" height="2.5"/><path d="M552.5 124.5 h6 l2.5 2 l-2.5 2 h-6 z"/></g>
 </g>
 <path d="M1225 104.5 h5 l-2.5 2.5z" fill="#222"/>
 <path d="M1238.5 103 h2.5 v3.5 h-2.5z M1239.7 106.5 v3 M1237.5 106.5 h5" fill="none" stroke="#222" stroke-width="0.8"/>
 <path d="M1250 104 l4.5 4.5 M1254.5 104 l-4.5 4.5" stroke="#222" stroke-width="1.1"/>
 <rect x="1275" y="100" width="3.5" height="17" fill="#9a9a9a"/>
</svg>
<div class="t" style="left:1272px;top:100.5px;transform-origin:0 0;transform:rotate(90deg);font-size:7.4px;color:#2a2a2a">Start</div>
<div class="a" style="left:539px;top:133px;width:710px;height:525px;background:#fff"></div>
<!--BP-->
<svg class="a" style="left:539px;top:133px" width="711" height="526" viewBox="539 133 711 526" font-family='"Liberation Sans",sans-serif'>
<defs>
<linearGradient id="ga" x1="0" x2="1" y1="0" y2="0"><stop offset="0" stop-color="#fcf9e6"/><stop offset="0.55" stop-color="#f8f2d2"/><stop offset="1" stop-color="#efe4ac"/></linearGradient>
<linearGradient id="ge" x1="0" x2="1" y1="0" y2="0"><stop offset="0" stop-color="#f6c6c6"/><stop offset="1" stop-color="#f0a8a8"/></linearGradient>
<linearGradient id="gg" x1="0" x2="1" y1="0" y2="1"><stop offset="0" stop-color="#d6ebbc"/><stop offset="1" stop-color="#a8cf84"/></linearGradient>
<pattern id="hatch" width="2.2" height="2.2" patternUnits="userSpaceOnUse" patternTransform="rotate(45)"><rect width="2.2" height="2.2" fill="#fff"/><line x1="0" y1="0" x2="0" y2="2.2" stroke="#222" stroke-width="1.2"/></pattern>
</defs>
<text x="548" y="160" font-size="18.3" fill="#000">Business Process</text>
<path d="M1157.7 182.5 H545.5 V335.5 H1157.7" fill="none" stroke="#2a2a2a" stroke-width="0.9" shape-rendering="crispEdges"/>
<path d="M556.5 182.5 V335.5" fill="none" stroke="#2a2a2a" stroke-width="0.9" shape-rendering="crispEdges"/>
<text transform="translate(553.2 258.5) rotate(-90)" font-size="5.6" font-weight="bold" text-anchor="middle" fill="#000">Pizza Customer</text>
<rect x="545.5" y="370.5" width="614" height="273" fill="none" stroke="#2a2a2a" stroke-width="0.9"/>
<path d="M556.5 370.5 V643.5 M556.5 477.5 H1159.5 M556.5 551.5 H1159.5" fill="none" stroke="#2a2a2a" stroke-width="0.9" shape-rendering="crispEdges"/>
<text transform="translate(553.2 506.5) rotate(-90)" font-size="5.8" font-weight="bold" text-anchor="middle" fill="#000">Pizza vender</text>
<text transform="translate(563.5 424) rotate(-90)" font-size="5.6" font-weight="bold" text-anchor="middle" fill="#000">Clerk</text>
<text transform="translate(563.5 514) rotate(-90)" font-size="5.6" font-weight="bold" text-anchor="middle" fill="#000">pizza chef</text>
<text transform="translate(563.5 597) rotate(-90)" font-size="5.6" font-weight="bold" text-anchor="middle" fill="#000">delivery boy</text>
<path d="M716 249.7 V312.4 Q716 315.6 713 315.6 H590 Q587 315.6 587 318.6" fill="none" stroke="#222" stroke-width="0.8" stroke-dasharray="4,2.5" shape-rendering="crispEdges"/>
<path d="M587 318.6 V404.5" fill="none" stroke="#c4c4c4" stroke-width="1.7" stroke-dasharray="4,2.5" shape-rendering="crispEdges"/>
<rect x="646.0" y="310.1" width="11" height="11" fill="#fbf3e0" stroke="#444" stroke-width="0.8"/><path d="M646.0 310.1 L651.5 316.15000000000003 L657.0 310.1" fill="none" stroke="#444" stroke-width="0.8"/>
<text x="645" y="329.46" font-size="5.6" text-anchor="middle" fill="#0c1640" stroke="#0c1640" stroke-width="0.12">pizza order</text>
<path d="M857.5 311 V341.6 Q857.5 344.6 854.5 344.6 H663.8 Q660.8 344.6 660.8 347.6" fill="none" stroke="#222" stroke-width="0.8" stroke-dasharray="4,2.5" shape-rendering="crispEdges"/>
<path d="M660.8 347.6 V404.5" fill="none" stroke="#c4c4c4" stroke-width="1.7" stroke-dasharray="4,2.5" shape-rendering="crispEdges"/>
<path d="M878.8 310.5 V354 Q878.8 357.1 875.8 357.1" fill="none" stroke="#c4c4c4" stroke-width="1.7" stroke-dasharray="4,2.5" shape-rendering="crispEdges"/>
<path d="M875.8 357.1 H727.3 Q724.3 357.1 724.3 360.1 V395.5" fill="none" stroke="#222" stroke-width="0.8" stroke-dasharray="4,2.5" shape-rendering="crispEdges"/>
<path d="M928.6 245 V434.6 Q928.6 437.6 925.6 437.6 H790.3 Q787.3 437.6 787.3 440.6 V577" fill="none" stroke="#222" stroke-width="0.8" stroke-dasharray="4,2.5" shape-rendering="crispEdges"/>
<rect x="852.7" y="431.8" width="11" height="11" fill="#fbf3e0" stroke="#444" stroke-width="0.8"/><path d="M852.7 431.8 L858.2 437.85 L863.7 431.8" fill="none" stroke="#444" stroke-width="0.8"/>
<text x="857" y="451.46" font-size="5.6" text-anchor="middle" fill="#0c1640" stroke="#0c1640" stroke-width="0.12">pizza</text>
<path d="M988.3 250 V454.2 Q988.3 457.2 985.3 457.2 H885.6 Q882.6 457.2 882.6 460.2 V576" fill="none" stroke="#222" stroke-width="0.8" stroke-dasharray="4,2.5" shape-rendering="crispEdges"/>
<rect x="930.5" y="451.8" width="11" height="11" fill="#fbf3e0" stroke="#444" stroke-width="0.8"/><path d="M930.5 451.8 L936 457.85 L941.5 451.8" fill="none" stroke="#444" stroke-width="0.8"/>
<text x="935" y="470.96" font-size="5.6" text-anchor="middle" fill="#0c1640" stroke="#0c1640" stroke-width="0.12">money</text>
<path d="M1013 252.5 V494 Q1013 497 1010 497" fill="none" stroke="#c4c4c4" stroke-width="1.7" stroke-dasharray="4,2.5" shape-rendering="crispEdges"/>
<path d="M1010 497 H911.7" fill="none" stroke="#222" stroke-width="0.8" stroke-dasharray="4,2.5" shape-rendering="crispEdges"/>
<path d="M911.7 497 Q908.7 497 908.7 500 V577" fill="none" stroke="#c4c4c4" stroke-width="1.7" stroke-dasharray="4,2.5" shape-rendering="crispEdges"/>
<rect x="955.5" y="491.0" width="11" height="11" fill="#bdbdbd" stroke="#333" stroke-width="0.8"/><path d="M955.5 491.0 L961 497.05 L966.5 491.0" fill="none" stroke="#333" stroke-width="0.8"/>
<text x="961" y="511.96" font-size="5.6" text-anchor="middle" fill="#0c1640" stroke="#0c1640" stroke-width="0.12">receipt</text>
<path d="M591.3 227 H610" fill="none" stroke="#222" stroke-width="0.9" shape-rendering="crispEdges"/>
<polygon points="617.00,227.00 609.50,223.40 609.50,230.60" fill="#000"/>
<path d="M677.3 227 H689" fill="none" stroke="#222" stroke-width="0.9" shape-rendering="crispEdges"/>
<polygon points="696.20,227.00 688.70,223.40 688.70,230.60" fill="#000"/>
<path d="M755.6 227 H771" fill="none" stroke="#222" stroke-width="0.9" shape-rendering="crispEdges"/>
<polygon points="778.50,227.00 771.00,223.40 771.00,230.60" fill="#000"/>
<path d="M801.3 227 H912" fill="none" stroke="#222" stroke-width="0.9" shape-rendering="crispEdges"/>
<polygon points="919.60,227.00 912.10,223.40 912.10,230.60" fill="#000"/>
<path d="M937.6 227 H962" fill="none" stroke="#222" stroke-width="0.9" shape-rendering="crispEdges"/>
<polygon points="969.30,227.00 961.80,223.40 961.80,230.60" fill="#000"/>
<path d="M1033.5 227 H1043" fill="none" stroke="#222" stroke-width="0.9" shape-rendering="crispEdges"/>
<polygon points="1050.80,227.00 1043.30,223.40 1043.30,230.60" fill="#000"/>
<path d="M1110.7 227 H1122" fill="none" stroke="#222" stroke-width="0.9" shape-rendering="crispEdges"/>
<polygon points="1129.20,227.00 1121.70,223.40 1121.70,230.60" fill="#000"/>
<path d="M899.2 294.2 H914.7 Q917.7 294.2 917.7 297.2 V317 Q917.7 320 914.7 320 H793 Q790 320 790 317 V246" fill="none" stroke="#222" stroke-width="0.9" shape-rendering="crispEdges"/>
<polygon points="790.00,238.60 786.40,246.10 793.60,246.10" fill="#000"/>
<path d="M790 286 H801" fill="none" stroke="#222" stroke-width="0.9" shape-rendering="crispEdges"/>
<polygon points="808.80,286.00 801.30,282.40 801.30,289.60" fill="#000"/>
<path d="M825.2 286 H832" fill="none" stroke="#222" stroke-width="0.9" shape-rendering="crispEdges"/>
<polygon points="839.00,286.00 831.50,282.40 831.50,289.60" fill="#000"/>
<circle cx="582.9" cy="227" r="8.4" fill="url(#ge)" stroke="#2a2a2a" stroke-width="0.8"/>
<text x="563" y="243.96" font-size="5.6" text-anchor="start" fill="#0c1640" stroke="#0c1640" stroke-width="0.12">Hungry for</text>
<text x="563" y="251.96" font-size="5.6" text-anchor="start" fill="#0c1640" stroke="#0c1640" stroke-width="0.12">pizza</text>
<rect x="618.5" y="212.5" width="60.299999999999955" height="32" rx="3" fill="#e0e0e0"/><rect x="617" y="211" width="60.299999999999955" height="32" rx="3" fill="url(#ga)" stroke="#222" stroke-width="0.95"/><text x="647.15" y="228.96" font-size="5.6" text-anchor="middle" fill="#141420" stroke="#141420" stroke-width="0.06">Select a pizza</text>
<rect x="697.7" y="212.5" width="59.39999999999998" height="32" rx="3" fill="#e0e0e0"/><rect x="696.2" y="211" width="59.39999999999998" height="32" rx="3" fill="url(#ga)" stroke="#222" stroke-width="0.95"/><text x="725.9000000000001" y="228.96" font-size="5.6" text-anchor="middle" fill="#141420" stroke="#141420" stroke-width="0.06">Order a pizza</text>
<circle cx="716" cy="246.6" r="3.1" fill="#f8f2e2" stroke="#444" stroke-width="0.7"/>
<polygon points="790,216.0 801.3,227.3 790,238.60000000000002 778.7,227.3" fill="url(#gg)" stroke="#3a3a3a" stroke-width="0.8"/>
<circle cx="928.6" cy="227" r="9" fill="url(#ge)" stroke="#2a2a2a" stroke-width="0.8"/><circle cx="928.6" cy="227" r="7.2" fill="none" stroke="#555" stroke-width="0.7"/><rect x="923.875" y="223.175" width="9.450000000000001" height="7.6499999999999995" fill="none" stroke="#333" stroke-width="0.8"/><path d="M923.875 223.175 L928.6 227.3825 L933.325 223.175" fill="none" stroke="#333" stroke-width="0.8"/>
<text x="911" y="214.96" font-size="5.6" text-anchor="start" fill="#0c1640" stroke="#0c1640" stroke-width="0.12">pizza</text>
<text x="911" y="222.96" font-size="5.6" text-anchor="start" fill="#0c1640" stroke="#0c1640" stroke-width="0.12">received</text>
<polygon points="928.60,236.00 925.60,243.00 931.60,243.00" fill="#f8f4e4" stroke="#555" stroke-width="0.7"/>
<circle cx="817" cy="286" r="8.2" fill="url(#ge)" stroke="#2a2a2a" stroke-width="0.8"/><circle cx="817" cy="286" r="6.3999999999999995" fill="none" stroke="#555" stroke-width="0.7"/><rect x="812.695" y="282.515" width="8.61" height="6.969999999999999" fill="none" stroke="#333" stroke-width="0.8"/><path d="M812.695 282.515 L817 286.3485 L821.3050000000001 282.515" fill="none" stroke="#333" stroke-width="0.8"/>
<text x="810" y="303.96" font-size="5.6" text-anchor="start" fill="#0c1640" stroke="#0c1640" stroke-width="0.12">60</text>
<text x="810" y="311.46" font-size="5.6" text-anchor="start" fill="#0c1640" stroke="#0c1640" stroke-width="0.12">minutes</text>
<rect x="840.5" y="273.9" width="60.200000000000045" height="31.600000000000023" rx="3" fill="#e0e0e0"/><rect x="839" y="272.4" width="60.200000000000045" height="31.600000000000023" rx="3" fill="url(#ga)" stroke="#222" stroke-width="0.95"/><text x="869.1" y="290.15999999999997" font-size="5.6" text-anchor="middle" fill="#141420" stroke="#141420" stroke-width="0.06">Ask for the pizza</text>
<circle cx="857.5" cy="307.8" r="3.1" fill="#f8f2e2" stroke="#444" stroke-width="0.7"/>
<polygon points="878.80,303.50 875.80,310.50 881.80,310.50" fill="#f8f4e4" stroke="#555" stroke-width="0.7"/>
<rect x="964.3" y="206.3" width="69.2" height="41.1" fill="url(#hatch)" stroke="none"/>
<rect x="970.8" y="212.5" width="59.100000000000136" height="32.400000000000006" rx="3" fill="#e0e0e0"/><rect x="969.3" y="211" width="59.100000000000136" height="32.400000000000006" rx="3" fill="url(#ga)" stroke="#222" stroke-width="0.95"/><text x="998.85" y="229.16" font-size="5.6" text-anchor="middle" fill="#141420" stroke="#141420" stroke-width="0.06">Pay the pizza</text>
<rect x="964.5999999999999" y="206.60000000000002" width="4.6" height="4.6" fill="#fff" stroke="#111" stroke-width="0.7"/>
<rect x="964.5999999999999" y="224.65" width="4.6" height="4.6" fill="#fff" stroke="#111" stroke-width="0.7"/>
<rect x="964.5999999999999" y="242.70000000000002" width="4.6" height="4.6" fill="#fff" stroke="#111" stroke-width="0.7"/>
<rect x="996.6999999999999" y="206.60000000000002" width="4.6" height="4.6" fill="#fff" stroke="#111" stroke-width="0.7"/>
<rect x="996.6999999999999" y="242.70000000000002" width="4.6" height="4.6" fill="#fff" stroke="#111" stroke-width="0.7"/>
<rect x="1028.8" y="206.60000000000002" width="4.6" height="4.6" fill="#fff" stroke="#111" stroke-width="0.7"/>
<rect x="1028.8" y="224.65" width="4.6" height="4.6" fill="#fff" stroke="#111" stroke-width="0.7"/>
<rect x="1028.8" y="242.70000000000002" width="4.6" height="4.6" fill="#fff" stroke="#111" stroke-width="0.7"/>
<circle cx="987.8" cy="246.8" r="3.1" fill="#f8f2e2" stroke="#444" stroke-width="0.7"/>
<polygon points="1013.00,245.50 1010.00,252.50 1016.00,252.50" fill="#f8f4e4" stroke="#555" stroke-width="0.7"/>
<path d="M1041.5 219 V211" fill="none" stroke="#111" stroke-width="0.8" shape-rendering="crispEdges"/>
<polygon points="1041.50,209.50 1039.90,212.50 1043.10,212.50" fill="#111"/>
<circle cx="1039.5" cy="234" r="2.4" fill="none" stroke="#222" stroke-width="0.8"/><path d="M1041.3 235.8 L1044 238.5" fill="none" stroke="#222" stroke-width="0.8" shape-rendering="crispEdges"/>
<path d="M1038 224 L1044 220 M1038 224 l3 2" fill="none" stroke="#555" stroke-width="0.7" shape-rendering="crispEdges"/>
<rect x="1052.3" y="212.5" width="59.90000000000009" height="32" rx="3" fill="#e0e0e0"/><rect x="1050.8" y="211" width="59.90000000000009" height="32" rx="3" fill="url(#ga)" stroke="#222" stroke-width="0.95"/><text x="1080.75" y="228.96" font-size="5.6" text-anchor="middle" fill="#141420" stroke="#141420" stroke-width="0.06">Eat the pizza</text>
<circle cx="1137.2" cy="226.6" r="8" fill="url(#ge)" stroke="#2a2a2a" stroke-width="1.8"/>
<text x="1131" y="242.96" font-size="5.6" text-anchor="start" fill="#0c1640" stroke="#0c1640" stroke-width="0.12">Hunger</text>
<text x="1131" y="250.46" font-size="5.6" text-anchor="start" fill="#0c1640" stroke="#0c1640" stroke-width="0.12">satisfied</text>
<path d="M594 412 Q594 409.4 597 409.4 H649 Q652 409.4 652 412.4 V414" fill="none" stroke="#222" stroke-width="0.9" shape-rendering="crispEdges"/>
<polygon points="619.00,409.40 611.50,405.80 611.50,413.00" fill="#000"/>
<polygon points="653.00,421.00 649.40,412.50 656.60,412.50" fill="#000"/>
<path d="M622.4 431.6 V506.3 Q622.4 509.3 625.4 509.3 H637" fill="none" stroke="#222" stroke-width="0.9" shape-rendering="crispEdges"/>
<polygon points="643.70,509.30 636.20,505.70 636.20,512.90" fill="#000"/>
<path d="M668 419.6 H686" fill="none" stroke="#222" stroke-width="0.9" shape-rendering="crispEdges"/>
<polygon points="693.60,419.60 686.10,416.00 686.10,423.20" fill="#000"/>
<path d="M730.4 434.4 V453.6 Q730.4 456.6 727.4 456.6 H662 Q659 456.6 659 453.6 V436" fill="none" stroke="#222" stroke-width="0.9" shape-rendering="crispEdges"/>
<polygon points="659.00,428.00 655.40,435.50 662.60,435.50" fill="#000"/>
<path d="M703.7 509.3 H726.8 Q729.8 509.3 729.8 512.3 V597.5 Q729.8 600.5 732.8 600.5 H746" fill="none" stroke="#888" stroke-width="0.9" shape-rendering="crispEdges"/>
<polygon points="753.40,600.50 745.90,596.90 745.90,604.10" fill="#000"/>
<path d="M813.4 599.5 H857" fill="none" stroke="#888" stroke-width="0.9" shape-rendering="crispEdges"/>
<polygon points="864.70,599.50 857.20,595.90 857.20,603.10" fill="#000"/>
<path d="M924.8 598 H958" fill="none" stroke="#888" stroke-width="0.9" shape-rendering="crispEdges"/>
<polygon points="964.80,598.00 957.30,594.40 957.30,601.60" fill="#000"/>
<circle cx="586" cy="419.6" r="8" fill="url(#ge)" stroke="#2a2a2a" stroke-width="0.8"/><rect x="581.8" y="416.20000000000005" width="8.4" height="6.8" fill="none" stroke="#333" stroke-width="0.8"/><path d="M581.8 416.20000000000005 L586 419.94 L590.1999999999999 416.20000000000005" fill="none" stroke="#333" stroke-width="0.8"/>
<polygon points="587.00,411.50 584.00,404.50 590.00,404.50" fill="#f8f4e4" stroke="#555" stroke-width="0.7"/>
<text x="591" y="435.96" font-size="5.6" text-anchor="middle" fill="#0c1640" stroke="#0c1640" stroke-width="0.12">Order received</text>
<polygon points="622.4,408.4 634.0,420 622.4,431.6 610.8,420" fill="url(#gg)" stroke="#3a3a3a" stroke-width="0.8"/><path d="M616.02 420 L628.78 420 M622.4 413.62 L622.4 426.38" stroke="#000" stroke-width="2.4"/>
<circle cx="660" cy="419.6" r="8" fill="url(#ge)" stroke="#2a2a2a" stroke-width="0.8"/><circle cx="660" cy="419.6" r="6.2" fill="none" stroke="#555" stroke-width="0.7"/><rect x="655.8" y="416.20000000000005" width="8.4" height="6.8" fill="none" stroke="#333" stroke-width="0.8"/><path d="M655.8 416.20000000000005 L660 419.94 L664.1999999999999 416.20000000000005" fill="none" stroke="#333" stroke-width="0.8"/>
<polygon points="660.80,411.50 657.80,404.50 663.80,404.50" fill="#f8f4e4" stroke="#555" stroke-width="0.7"/>
<rect x="695.1" y="403.9" width="60.0" height="32.0" rx="3" fill="#e0e0e0"/><rect x="693.6" y="402.4" width="60.0" height="32.0" rx="3" fill="url(#ga)" stroke="#222" stroke-width="0.95"/><text x="723.6" y="420.35999999999996" font-size="5.6" text-anchor="middle" fill="#141420" stroke="#141420" stroke-width="0.06">Calm customer</text>
<circle cx="724.3" cy="398.6" r="3.1" fill="#f8f2e2" stroke="#444" stroke-width="0.7"/>
<text x="664" y="442.96" font-size="5.6" text-anchor="start" fill="#0c1640" stroke="#0c1640" stroke-width="0.12">"where is my</text>
<text x="664" y="450.96" font-size="5.6" text-anchor="start" fill="#0c1640" stroke="#0c1640" stroke-width="0.12">pizza"</text>
<rect x="645.2" y="495.5" width="60.0" height="33.5" rx="3" fill="#e0e0e0"/><rect x="643.7" y="494" width="60.0" height="33.5" rx="3" fill="url(#ga)" stroke="#222" stroke-width="0.95"/><text x="673.7" y="512.71" font-size="5.6" text-anchor="middle" fill="#141420" stroke="#141420" stroke-width="0.06">Bake the pizza</text>
<rect x="754.9" y="585.0" width="60.0" height="32.200000000000045" rx="3" fill="#e0e0e0"/><rect x="753.4" y="583.5" width="60.0" height="32.200000000000045" rx="3" fill="url(#ga)" stroke="#222" stroke-width="0.95"/><text x="783.4" y="601.5600000000001" font-size="5.6" text-anchor="middle" fill="#141420" stroke="#141420" stroke-width="0.06">Deliver the pizza</text>
<circle cx="787.3" cy="580" r="3.1" fill="#f8f2e2" stroke="#444" stroke-width="0.7"/>
<rect x="866.2" y="584.8" width="60.09999999999991" height="32.30000000000007" rx="3" fill="#e0e0e0"/><rect x="864.7" y="583.3" width="60.09999999999991" height="32.30000000000007" rx="3" fill="url(#ga)" stroke="#222" stroke-width="0.95"/><text x="894.75" y="601.4100000000001" font-size="5.6" text-anchor="middle" fill="#141420" stroke="#141420" stroke-width="0.06">Receive payment</text>
<polygon points="882.60,583.00 879.60,576.00 885.60,576.00" fill="#f8f4e4" stroke="#555" stroke-width="0.7"/>
<circle cx="908.7" cy="580" r="3.1" fill="#f8f2e2" stroke="#444" stroke-width="0.7"/>
<circle cx="973.2" cy="597.4" r="8.3" fill="url(#ge)" stroke="#2a2a2a" stroke-width="1.8"/><circle cx="973.2" cy="597.4" r="4.565" fill="#000"/>
</svg>
<!--/BP-->
<!-- right v scroll -->
<div class="a" style="left:1249px;top:133px;width:11px;height:536px;background:#6f6f6f"></div>
<div class="a" style="left:1250px;top:134px;width:9px;height:9px;background:#a0a0a0"></div>
<div class="a" style="left:1250px;top:144px;width:9px;height:404px;background:#9c9c9c"></div>
<div class="a" style="left:1250px;top:648px;width:9px;height:10px;background:#a0a0a0"></div>
<svg class="a" style="left:1249px;top:133px" width="11" height="526"><path d="M2.5 7 h6 l-3 -3z" fill="#222"/><path d="M2.5 519.5 h6 l-3 3z" fill="#222"/></svg>
<!-- right h scroll -->
<div class="a" style="left:539px;top:658px;width:721px;height:11.5px;background:#6f6f6f"></div>
<div class="a" style="left:540px;top:659px;width:655px;height:9px;background:#9d9d9d"></div>
<div class="a" style="left:540px;top:659px;width:10px;height:9px;background:#a0a0a0;border-right:1px solid #888"></div>
<div class="a" style="left:1239px;top:659px;width:9.5px;height:9px;background:#a0a0a0"></div>
<svg class="a" style="left:539px;top:658px" width="721" height="12"><path d="M6.5 3 v6 l-3 -3z" fill="#222"/><path d="M704.5 3 v6 l3 -3z" fill="#222"/></svg>
<!-- right tabs -->
<div class="a" style="left:608px;top:669px;width:124px;height:15px;background:#c6c6c6;border:1px solid #7a7a7a;border-top:none"></div>
<div class="t" style="left:554px;top:671.5px;font-size:7.4px;color:#222">Process Model</div>
<div class="t" style="left:622.5px;top:671.5px;font-size:7.7px;color:#222">Ordering and delivering Pizza</div>
<svg class="a" style="left:539px;top:669px" width="200" height="16" viewBox="539 669 200 16">
 <g>
  <g fill="#e4eefc" stroke="#3a6ad0" stroke-width="0.8"><rect x="544.5" y="671.5" width="2.5" height="2.5"/><rect x="548.5" y="671.5" width="2.5" height="2.5"/><path d="M543.5 675.5 h6 l2.5 2 l-2.5 2 h-6 z"/></g>
  <g fill="#e4eefc" stroke="#3a6ad0" stroke-width="0.8"><rect x="612.5" y="671.5" width="2.5" height="2.5"/><rect x="616.5" y="671.5" width="2.5" height="2.5"/><path d="M611.5 675.5 h6 l2.5 2 l-2.5 2 h-6 z"/></g>
 </g>
</svg>

<div id="lb" class="a" style="left:0;top:0;width:1px;height:704px;background:#a8a8a8"></div>
<!-- status bar -->
<div class="a" style="left:0;top:704px;width:1280px;height:14.5px;background:#5b5b5b"></div>
<div class="t" style="left:4px;top:708.5px;font-size:7.6px;color:#ececec">Business Process Diagram:Ordering and delivering Pizza:</div>
<div class="t" style="left:209.5px;top:708.5px;font-size:7.6px;color:#ececec">created: 23/09/2010</div>
<div class="t" style="left:282.5px;top:708.5px;font-size:7.6px;color:#ececec">modified: 13/09/2016 11:42:44 AM</div>
<div class="t" style="left:403px;top:708.5px;font-size:7.6px;color:#ececec">84%</div>
<div class="t" style="left:426px;top:708.5px;font-size:7.6px;color:#ececec">827 x 1169</div>
<svg class="a" style="left:1050px;top:704px" width="230" height="15" viewBox="1050 704 230 15">
 <path d="M1057.5 712.5 h5" stroke="#a0a0a0" stroke-width="1"/>
 <path d="M1070 712.5 h58" stroke="#a0a0a0" stroke-width="1"/>
 <rect x="1069" y="708" width="2.5" height="9" fill="#b0b0b0"/>
 <path d="M1134.5 712.5 h6 M1137.5 709.5 v6" stroke="#a0a0a0" stroke-width="1"/>
</svg>
<div class="t" style="left:1150px;top:708px;font-size:7.6px;color:#9c9c9c">CAP</div>
<div class="t" style="left:1176px;top:708px;font-size:7.6px;color:#9c9c9c">NUM</div>
<div class="t" style="left:1205.5px;top:708px;font-size:7.6px;color:#9c9c9c">SCRL</div>
<div class="t" style="left:1236px;top:708px;font-size:7.6px;color:#9c9c9c">CLOUD</div>
</body></html>
